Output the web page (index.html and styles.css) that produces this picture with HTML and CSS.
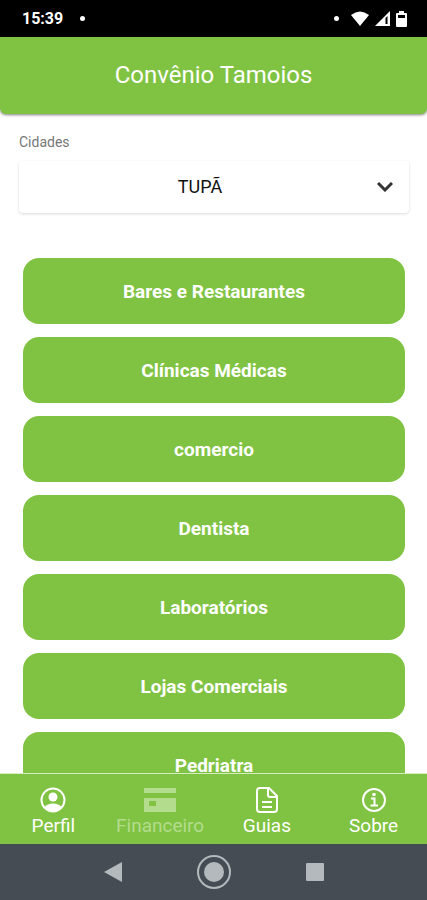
FILE: index.html
```html
<!DOCTYPE html>
<html lang="pt-BR">
  <head>
    <meta charset="UTF-8" />
    <meta name="viewport" content="width=device-width, initial-scale=1.0" />
    <title>Convênio Tamoios</title>
    <link rel="stylesheet" href="styles.css">
  </head>
  <body>
    <div class="status-bar">
      <span class="clock">15:39</span>
      <span class="dot"></span>
      <div class="status-icons">
        <span class="dot"></span>
        <svg class="wifi" viewBox="0 0 18 15" width="18" height="15">
          <path d="M0 4Q9-3 18 4L9 15Z" />
        </svg>
        <svg class="signal" viewBox="0 0 15 15" width="15" height="15">
          <path d="M0 15L15 0V15Z" />
          <path class="signal-gap" d="M10.5 7L12.5 5V13H10.5Z" />
        </svg>
        <svg class="battery" viewBox="0 0 11 16" width="11" height="16">
          <path fill-rule="evenodd" d="M3 0H8V2H10Q11 2 11 3V15Q11 16 10 16H1Q0 16 0 15V3Q0 2 1 2H3ZM2 4V7H9V4Z" />
        </svg>
      </div>
    </div>

    <header class="header">
      <h1>Convênio Tamoios</h1>
    </header>

    <main class="content">
      <label class="city-label" for="city">Cidades</label>
      <div class="city-field">
        <select id="city" class="city-select">
          <option>TUPÃ</option>
        </select>
        <svg class="chevron" viewBox="0 0 16 10" width="16" height="10">
          <path d="M1 1L8 8L15 1" />
        </svg>
      </div>

      <div class="categories">
        <button type="button">Bares e Restaurantes</button>
        <button type="button">Clínicas Médicas</button>
        <button type="button">comercio</button>
        <button type="button">Dentista</button>
        <button type="button">Laboratórios</button>
        <button type="button">Lojas Comerciais</button>
        <button type="button">Pedriatra</button>
      </div>
    </main>

    <nav class="tabs">
      <a href="#perfil" class="tab">
        <svg viewBox="0 0 26 26" width="26" height="26">
          <circle class="line" cx="13" cy="13" r="11.5" />
          <circle class="solid" cx="13" cy="10" r="4.5" />
          <path class="solid" d="M4.5 20.5C6 17.5 9.5 16.5 13 16.5S20 17.5 21.5 20.5Q18 24.5 13 24.5T4.5 20.5Z" />
        </svg>
        <span>Perfil</span>
      </a>
      <a href="#financeiro" class="tab disabled" aria-disabled="true">
        <svg viewBox="0 0 32 26" width="32" height="26">
          <path class="solid" fill-rule="evenodd" d="M0 1H32V6H0ZM0 11H32V25H0ZM5 14V19H12V14Z" />
        </svg>
        <span>Financeiro</span>
      </a>
      <a href="#guias" class="tab">
        <svg viewBox="0 0 22 26" width="22" height="26">
          <path class="line" d="M4 1H13L21 9V22Q21 25 18 25H4Q1 25 1 22V4Q1 1 4 1Z" />
          <path class="line" d="M12 1V8Q12 10 14 10H21M6 15H16M6 20H16" />
        </svg>
        <span>Guias</span>
      </a>
      <a href="#sobre" class="tab">
        <svg viewBox="0 0 26 26" width="26" height="26">
          <circle class="line" cx="13" cy="13" r="11" />
          <circle class="solid" cx="13" cy="7.5" r="1.8" />
          <path class="line" d="M10 11.5H13.5V18.5M9.5 18.5H17" />
        </svg>
        <span>Sobre</span>
      </a>
    </nav>

    <div class="system-nav">
      <button type="button" aria-label="Voltar">
        <svg viewBox="0 0 18 20" width="18" height="20">
          <path d="M18 0V20L0 10Z" />
        </svg>
      </button>
      <button type="button" aria-label="Início">
        <svg viewBox="0 0 36 36" width="36" height="36">
          <circle class="ring" cx="18" cy="18" r="16" />
          <circle cx="18" cy="18" r="10" />
        </svg>
      </button>
      <button type="button" aria-label="Recentes">
        <svg viewBox="0 0 20 20" width="20" height="20">
          <rect x="1" y="1" width="18" height="18" rx="1" />
        </svg>
      </button>
    </div>
  </body>
</html>
```
FILE: styles.css
```css
* {
  box-sizing: border-box;
}

body {
  display: flex;
  flex-direction: column;
  height: 100vh;
  margin: 0;
  overflow: hidden;
  background: #fff;
  font-family: Roboto, sans-serif;
}

button,
select {
  font-family: inherit;
  border: none;
}

.status-bar {
  display: flex;
  flex: none;
  align-items: center;
  gap: 17px;
  height: 37px;
  padding: 0 20px 0 22px;
  background: #000;
  color: #fff;
}

.clock {
  font-size: 16px;
  font-weight: 700;
}

.dot {
  width: 5px;
  height: 5px;
  border-radius: 50%;
  background: #fff;
}

.status-icons {
  display: flex;
  align-items: center;
  gap: 6px;
  margin-left: auto;
  fill: #fff;
}

.wifi {
  margin-left: 6px;
}

.signal-gap {
  fill: #000;
}

.header {
  display: flex;
  flex: none;
  align-items: center;
  justify-content: center;
  height: 77px;
  padding-bottom: 2px;
  border-radius: 0 0 6px 6px;
  background: #80c342;
  box-shadow: 0 1px 3px rgba(0, 0, 0, 0.5);
}

h1 {
  margin: 0;
  color: #fff;
  font-size: 24px;
  font-weight: 400;
}

.content {
  flex: 1;
  min-height: 0;
  padding: 20px 18px 0 19px;
  overflow: hidden;
}

.city-label {
  display: block;
  color: #777;
  font-size: 14px;
  line-height: 16px;
}

.city-field {
  display: grid;
  align-items: center;
  margin-top: 11px;
}

.city-field > * {
  grid-area: 1 / 1;
}

.city-select {
  width: 100%;
  height: 52px;
  padding: 0 28px 2px 0;
  appearance: none;
  border-radius: 4px;
  background: #fff;
  box-shadow: 0 1px 3px rgba(0, 0, 0, 0.15);
  color: #111;
  font-size: 18px;
  text-align: center;
  text-align-last: center;
}

.chevron {
  justify-self: end;
  margin-right: 16px;
  fill: none;
  stroke: #333;
  stroke-width: 3;
  pointer-events: none;
}

.categories {
  display: flex;
  flex-direction: column;
  gap: 13px;
  margin-top: 45px;
  padding: 0 4px;
}

.categories button {
  flex: none;
  height: 66px;
  border-radius: 16px;
  background: #80c342;
  color: #fff;
  font-size: 19px;
  font-weight: 700;
}

.tabs {
  display: grid;
  flex: none;
  grid-template-columns: repeat(4, 1fr);
  height: 71px;
  border-top: 1px solid #d5ecc0;
  background: #80c342;
}

.tab {
  display: flex;
  flex-direction: column;
  align-items: center;
  gap: 2px;
  padding-top: 13px;
  color: #fff;
  font-size: 19px;
  line-height: 22px;
  text-decoration: none;
}

.disabled {
  color: #b3dc8d;
}

.solid {
  fill: currentColor;
}

.line {
  fill: none;
  stroke: currentColor;
  stroke-width: 2;
}

.system-nav {
  display: flex;
  flex: none;
  align-items: center;
  justify-content: center;
  gap: 65px;
  height: 56px;
  background: #454c53;
}

.system-nav button {
  display: flex;
  align-items: center;
  justify-content: center;
  width: 36px;
  height: 36px;
  padding: 0;
  background: none;
  fill: #b4b9bd;
}

.system-nav .ring {
  fill: none;
  stroke: #b4b9bd;
  stroke-width: 2;
}
```
